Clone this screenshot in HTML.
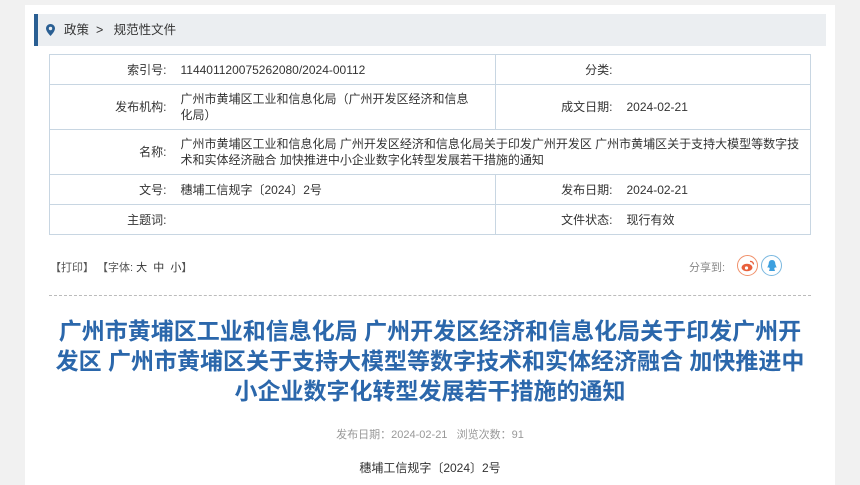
<!DOCTYPE html>
<html><head><meta charset="utf-8"><style>
*{margin:0;padding:0;box-sizing:border-box}
body{width:860px;height:485px;background:#f1f1f1;font-family:"Liberation Sans","Noto Sans CJK SC",sans-serif;color:#333;overflow:hidden;position:relative}
.panel{position:absolute;left:25px;top:5px;width:810px;height:480px;background:#fff}
.bc{position:absolute;left:34px;top:14px;width:792px;height:32px;background:#ebeef1;border-left:4px solid #2a5f93;font-size:12.5px;line-height:32px;color:#333}
.bc svg{position:absolute;left:8px;top:10px}
table{position:absolute;left:49px;top:54px;width:762px;border-collapse:collapse;font-size:12px;table-layout:fixed;border:1px solid #c8d6e2}
td{border-top:1px solid #c8d6e2;border-bottom:1px solid #c8d6e2;vertical-align:middle;line-height:16px;padding:0}
td.l{text-align:right;padding-right:14px}
td.m{border-right:1px solid #c8d6e2;padding-right:20px}
.tools{position:absolute;left:50px;top:259px;font-size:11px;color:#555}
.share{position:absolute;left:689px;top:259px;font-size:11px;color:#888}
.ic{position:absolute;top:255px;width:21px;height:21px;border-radius:50%;border:1.5px solid;display:flex;align-items:center;justify-content:center}
.dash{position:absolute;left:49px;top:295px;width:762px;border-top:1px dashed #bbb}
h1{position:absolute;left:20px;top:316px;width:820px;text-align:center;font-size:23px;line-height:30px;color:#2b67ab;font-weight:bold;white-space:nowrap}
.meta{position:absolute;left:0;width:860px;top:426px;text-align:center;font-size:11px;color:#999}
.num{position:absolute;left:0;width:860px;top:459px;text-align:center;font-size:12px;color:#333}
</style></head><body>
<div class="panel"></div>
<div class="bc"><svg width="9" height="12" viewBox="0 0 9 12"><path d="M4.5 0C2 0 0 2 0 4.5 0 7.5 4.5 12 4.5 12S9 7.5 9 4.5C9 2 7 0 4.5 0z" fill="#2a5f93"/><circle cx="4.5" cy="4.5" r="1.7" fill="#ebeef1"/></svg><span style="position:absolute;left:26px">政策&nbsp;&nbsp;&gt;&nbsp;&nbsp;&nbsp;规范性文件</span></div>
<table>
<colgroup><col style="width:131px"><col style="width:315px"><col style="width:131px"><col></colgroup>
<tr style="height:30px"><td class="l">索引号:</td><td class="m">114401120075262080/2024-00112</td><td class="l">分类:</td><td></td></tr>
<tr style="height:45px"><td class="l">发布机构:</td><td class="m">广州市黄埔区工业和信息化局（广州开发区经济和信息化局）</td><td class="l">成文日期:</td><td>2024-02-21</td></tr>
<tr style="height:45px"><td class="l">名称:</td><td colspan="3" style="padding-right:4px">广州市黄埔区工业和信息化局 广州开发区经济和信息化局关于印发广州开发区 广州市黄埔区关于支持大模型等数字技术和实体经济融合 加快推进中小企业数字化转型发展若干措施的通知</td></tr>
<tr style="height:30px"><td class="l">文号:</td><td class="m">穗埔工信规字〔2024〕2号</td><td class="l">发布日期:</td><td>2024-02-21</td></tr>
<tr style="height:30px"><td class="l">主题词:</td><td class="m"></td><td class="l">文件状态:</td><td>现行有效</td></tr>
</table>
<div class="tools">【打印】 【字体: <span style="color:#333">大&nbsp;&nbsp;中&nbsp;&nbsp;小</span>】</div>
<div class="share">分享到:</div>
<div class="ic" style="left:737px;border-color:#f0906a"><svg width="14" height="12" viewBox="0 0 14 12"><ellipse cx="6" cy="7.5" rx="5.5" ry="3.8" fill="#e8603c"/><circle cx="5.5" cy="8" r="1.6" fill="#fff"/><path d="M9 1.5a3 3 0 0 1 3.5 3" stroke="#e8603c" fill="none" stroke-width="1.3"/></svg></div>
<div class="ic" style="left:761px;border-color:#7ab8e0"><svg width="12" height="14" viewBox="0 0 12 14"><path d="M6 1C3.7 1 2.7 2.8 2.7 4.8c0 1-1.5 3-1 4 .4.4 1-.5 1.2-.8.3 1 .9 1.5.9 1.5L3 12h6l-.8-2.5s.6-.5.9-1.5c.2.3.8 1.2 1.2.8.5-1-1-3-1-4C9.3 2.8 8.3 1 6 1z" fill="#3ea0df"/></svg></div>
<div class="dash"></div>
<h1>广州市黄埔区工业和信息化局 广州开发区经济和信息化局关于印发广州开<br>发区 广州市黄埔区关于支持大模型等数字技术和实体经济融合 加快推进中<br>小企业数字化转型发展若干措施的通知</h1>
<div class="meta">发布日期：2024-02-21&nbsp;&nbsp;&nbsp;浏览次数：91</div>
<div class="num">穗埔工信规字〔2024〕2号</div>
</body></html>
